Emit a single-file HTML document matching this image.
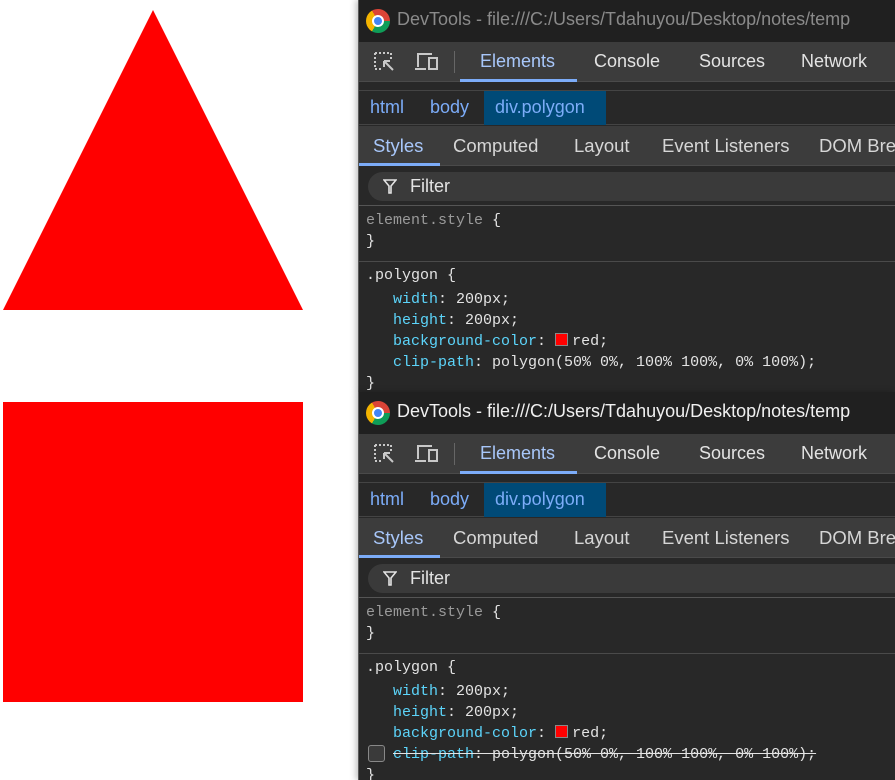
<!DOCTYPE html>
<html><head><meta charset="utf-8"><style>
*{margin:0;padding:0;box-sizing:border-box}
body{width:895px;height:780px;background:#fff;position:relative;overflow:hidden;font-family:"Liberation Sans",sans-serif}
span{white-space:nowrap}
.tri{position:absolute;left:3px;top:10px;width:300px;height:300px;background:red;clip-path:polygon(50% 0,100% 100%,0 100%)}
.sq{position:absolute;left:3px;top:402px;width:300px;height:300px;background:red}
.dt{position:absolute;left:358px;width:537px;height:392px;background:#282828;border-left:1px solid #5a5a5a;overflow:hidden;box-shadow:-2px 0 6px rgba(0,0,0,.25)}
.title{position:absolute;left:0;top:0;width:100%;height:42px;background:#202020}
.title span{position:absolute;left:38px;top:9px;font-size:18px;color:#8a8a8a;white-space:nowrap}
.act .title span{color:#f0f0f0}
.chrome{position:absolute;left:7px;top:9px;width:24px;height:24px;border-radius:50%;background:conic-gradient(from -30deg,#db4437 0 120deg,#0f9d58 120deg 240deg,#f4b400 240deg 360deg)}
.chrome:after{content:"";position:absolute;left:6px;top:6px;width:12px;height:12px;border-radius:50%;background:#4285f4;border:2px solid #fff;box-sizing:border-box}
.tb{position:absolute;top:42px;left:0;width:100%;height:40px;background:#3c3c3c;border-bottom:1px solid #4a4a4a}
.tb .t{position:absolute;top:9px;font-size:18px;color:#e3e3e3}
.bc{position:absolute;top:90px;left:0;width:100%;height:35px;background:#282828;border-top:1px solid #444;border-bottom:1px solid #444}
.bc span{position:absolute;top:6px;font-size:18px;color:#7cacf8}
.st{position:absolute;top:126px;left:0;width:100%;height:40px;background:#3c3c3c;border-bottom:1px solid #4a4a4a}
.st span{position:absolute;top:9px;font-size:18.5px;color:#d6d6d6}
.fl{position:absolute;top:167px;left:0;width:100%;height:39px;background:#282828;border-bottom:1px solid #555}
.pill{position:absolute;left:9px;top:5px;width:540px;height:29px;border-radius:15px;background:#3a3a3a}
.pill span{position:absolute;left:42px;top:4px;font-size:18px;color:#e3e3e3}
.code{position:absolute;left:7px;font-family:"Liberation Mono",monospace;font-size:15px;letter-spacing:0;color:#e3e3e3;white-space:pre;line-height:21px}
.p{color:#5cd5fb}.g{color:#9a9a9a}
.hr{position:absolute;left:0;width:100%;height:1px;background:#4a4a4a;top:261px}
.sw{display:inline-block;width:13px;height:13px;background:#f00;border:1px solid #888;vertical-align:-1px;margin-right:4px}
</style></head><body>
<div class="tri"></div><div class="sq"></div>

<div class="dt" style="top:0">
<div class="title"><div class="chrome"></div><span>DevTools - file:///C:/Users/Tdahuyou/Desktop/notes/temp</span></div>
<div class="tb">
<svg style="position:absolute;left:14px;top:9px" width="24" height="22" viewBox="0 0 24 22" fill="none" stroke="#c8c8c8" stroke-width="2"><path d="M2 2h16M2 2v16M2 18h6M18 2v6" stroke-dasharray="2 2"/><path d="M11 10l9 9M11 10h6M11 10v6"/></svg>
<svg style="position:absolute;left:55px;top:9px" width="26" height="22" viewBox="0 0 26 22" fill="none" stroke="#c8c8c8" stroke-width="2"><path d="M4 16V3h14M1 18h11"/><rect x="15" y="7" width="8" height="11"/></svg>
<div style="position:absolute;left:95px;top:9px;width:1px;height:22px;background:#666"></div>
<span class="t" style="left:121px;color:#a8c7fa">Elements</span>
<div style="position:absolute;left:101px;top:37px;width:117px;height:3px;background:#7cacf8"></div>
<span class="t" style="left:235px">Console</span>
<span class="t" style="left:340px">Sources</span>
<span class="t" style="left:442px">Network</span>
</div>
<div class="bc"><div style="position:absolute;left:125px;top:0;width:122px;height:34px;background:#004a77"></div>
<span style="left:11px">html</span><span style="left:71px">body</span><span style="left:136px">div.polygon</span></div>
<div class="st"><span style="left:14px;color:#a8c7fa">Styles</span><div style="position:absolute;left:0;top:37px;width:81px;height:3px;background:#7cacf8"></div>
<span style="left:94px">Computed</span><span style="left:215px">Layout</span><span style="left:303px">Event Listeners</span><span style="left:460px">DOM Breakpoints</span></div>
<div class="fl"><div class="pill"><svg style="position:absolute;left:15px;top:7px" width="14" height="15" viewBox="0 0 14 15" fill="none" stroke="#e3e3e3" stroke-width="1.6"><path d="M1 1h12L8 7v7H6V7z"/></svg><span>Filter</span></div></div>
<div class="code" style="top:210px"><span class="g">element.style</span> {
}</div>
<div class="hr"></div>
<div class="code" style="top:265px">.polygon {</div>
<div class="code" style="top:289px">   <span class="p">width</span>: 200px;
   <span class="p">height</span>: 200px;
   <span class="p">background-color</span>: <span class="sw"></span>red;
   <span class="p">clip-path</span>: polygon(50% 0%, 100% 100%, 0% 100%);
}</div>
</div>

<div class="dt act" style="top:392px;height:388px">
<div class="title"><div class="chrome"></div><span>DevTools - file:///C:/Users/Tdahuyou/Desktop/notes/temp</span></div>
<div class="tb">
<svg style="position:absolute;left:14px;top:9px" width="24" height="22" viewBox="0 0 24 22" fill="none" stroke="#c8c8c8" stroke-width="2"><path d="M2 2h16M2 2v16M2 18h6M18 2v6" stroke-dasharray="2 2"/><path d="M11 10l9 9M11 10h6M11 10v6"/></svg>
<svg style="position:absolute;left:55px;top:9px" width="26" height="22" viewBox="0 0 26 22" fill="none" stroke="#c8c8c8" stroke-width="2"><path d="M4 16V3h14M1 18h11"/><rect x="15" y="7" width="8" height="11"/></svg>
<div style="position:absolute;left:95px;top:9px;width:1px;height:22px;background:#666"></div>
<span class="t" style="left:121px;color:#a8c7fa">Elements</span>
<div style="position:absolute;left:101px;top:37px;width:117px;height:3px;background:#7cacf8"></div>
<span class="t" style="left:235px">Console</span>
<span class="t" style="left:340px">Sources</span>
<span class="t" style="left:442px">Network</span>
</div>
<div class="bc"><div style="position:absolute;left:125px;top:0;width:122px;height:34px;background:#004a77"></div>
<span style="left:11px">html</span><span style="left:71px">body</span><span style="left:136px">div.polygon</span></div>
<div class="st"><span style="left:14px;color:#a8c7fa">Styles</span><div style="position:absolute;left:0;top:37px;width:81px;height:3px;background:#7cacf8"></div>
<span style="left:94px">Computed</span><span style="left:215px">Layout</span><span style="left:303px">Event Listeners</span><span style="left:460px">DOM Breakpoints</span></div>
<div class="fl"><div class="pill"><svg style="position:absolute;left:15px;top:7px" width="14" height="15" viewBox="0 0 14 15" fill="none" stroke="#e3e3e3" stroke-width="1.6"><path d="M1 1h12L8 7v7H6V7z"/></svg><span>Filter</span></div></div>
<div class="code" style="top:210px"><span class="g">element.style</span> {
}</div>
<div class="hr"></div>
<div class="code" style="top:265px">.polygon {</div>
<div class="code" style="top:289px">   <span class="p">width</span>: 200px;
   <span class="p">height</span>: 200px;
   <span class="p">background-color</span>: <span class="sw"></span>red;
   <span style="text-decoration:line-through"><span class="p">clip-path</span>: polygon(50% 0%, 100% 100%, 0% 100%);</span>
}</div>
<div style="position:absolute;left:9px;top:353px;width:17px;height:17px;border:1px solid #888;border-radius:3px;background:#3a3a3a"></div>
</div>
</body></html>
